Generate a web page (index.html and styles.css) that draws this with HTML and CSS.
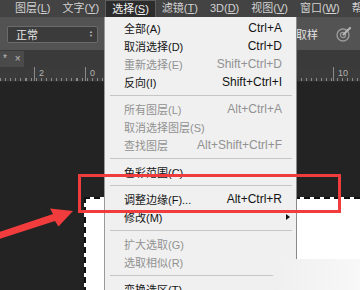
FILE: index.html
```html
<!DOCTYPE html>
<html lang="zh-CN">
<head>
    <meta charset="UTF-8">
    <title>选择菜单</title>
    <link rel="stylesheet" href="styles.css">
</head>
<body>

<div class="app">
    <div class="menubar">
        <span class="top-item">图层(<u>L</u>)</span>
        <span class="top-item">文字(<u>Y</u>)</span>
        <span class="top-item active">选择(<u>S</u>)</span>
        <span class="top-item">滤镜(<u>T</u>)</span>
        <span class="top-item">3D(<u>D</u>)</span>
        <span class="top-item">视图(<u>V</u>)</span>
        <span class="top-item">窗口(<u>W</u>)</span>
        <span class="top-item">帮</span>
    </div>

    <div class="optbar">
        <div class="blend">
            <span>正常</span>
            <span class="spin">&#9650;<br>&#9660;</span>
        </div>
        <span class="opt-label">取样</span>
        <svg class="opt-icon" width="16" height="16" viewBox="0 0 16 16">
            <circle cx="7" cy="9" r="6" fill="none" stroke="#9a9a9a" stroke-width="1.4"/>
            <circle cx="7" cy="9" r="2.6" fill="none" stroke="#9a9a9a" stroke-width="1.2"/>
            <path d="M7.5 8.5 L14 2" stroke="#b5b5b5" stroke-width="2.2" stroke-linecap="round"/>
        </svg>
    </div>

    <div class="tabbar">
        <div class="tab">* <span class="close">×</span></div>
    </div>

    <div class="ruler">
        <div class="ruler-lead"></div>
        <div class="major" style="width:51px">2</div>
        <div class="major" style="width:248px">0</div>
        <div class="major">10</div>
    </div>

    <div class="canvas">
        <div class="doc"></div>
    </div>

    <div class="menu">
        <div class="item"><span>全部(A)</span><span class="key">Ctrl+A</span></div>
        <div class="item"><span>取消选择(D)</span><span class="key">Ctrl+D</span></div>
        <div class="item off"><span>重新选择(E)</span><span class="key">Shift+Ctrl+D</span></div>
        <div class="item"><span>反向(I)</span><span class="key">Shift+Ctrl+I</span></div>
        <div class="sep"></div>
        <div class="item off"><span>所有图层(L)</span><span class="key">Alt+Ctrl+A</span></div>
        <div class="item off"><span>取消选择图层(S)</span></div>
        <div class="item off"><span>查找图层</span><span class="key">Alt+Shift+Ctrl+F</span></div>
        <div class="sep"></div>
        <div class="item"><span>色彩范围(C)</span></div>
        <div class="sep"></div>
        <div class="item"><span>调整边缘(F)...</span><span class="key">Alt+Ctrl+R</span></div>
        <div class="item"><span>修改(M)</span><span class="sub"></span></div>
        <div class="sep"></div>
        <div class="item off"><span>扩大选取(G)</span></div>
        <div class="item off"><span>选取相似(R)</span></div>
        <div class="sep"></div>
        <div class="item"><span>变换选区(T)</span></div>
    </div>

    <div class="mark"></div>

    <svg class="arrow" width="80" height="50" viewBox="0 205 80 50">
        <polygon points="-10,235 53,214 50,208.5 73,211 58.5,226.5 55,221 -10,242" fill="#f03c3c"/>
    </svg>

    <div class="fade"></div>
</div>

</body>
</html>
```

FILE: styles.css
```css
body {
    margin: 0;
    font-family: "Liberation Sans", "Noto Sans CJK SC", sans-serif;
    font-size: 11px;
}
.app {
    position: relative;
    width: 360px;
    height: 290px;
    overflow: hidden;
    background: #232323;
}

/* top menu bar */
.menubar {
    display: flex;
    height: 17px;
    padding-left: 9px;
    background: #434343;
    color: #d2d2d2;
    line-height: 17px;
    white-space: nowrap;
}
.top-item {
    padding: 0 6px;
    box-sizing: border-box;
}
.top-item.active {
    background: #2c2c2c;
    border: 1px solid #5e5e5e;
    border-bottom: none;
    line-height: 16px;
    color: #f2f2f2;
}

/* options bar */
.optbar {
    display: flex;
    align-items: center;
    height: 34px;
    padding: 0 8px 0 7px;
    background: #535353;
    border-bottom: 1px solid #3a3a3a;
    box-sizing: border-box;
}
.blend {
    display: flex;
    align-items: center;
    justify-content: space-between;
    width: 91px;
    height: 17px;
    padding: 0 4px 0 8px;
    margin-top: 1px;
    box-sizing: border-box;
    background: #3b3b3b;
    border: 1px solid #6b6b6b;
    border-radius: 2px;
    color: #e6e6e6;
}
.spin {
    font-size: 4px;
    line-height: 4px;
    color: #bcbcbc;
    text-align: center;
}
.opt-label {
    margin-left: auto;
    color: #e4e4e4;
    font-size: 11px;
}
.opt-icon {
    margin-left: 18px;
}

/* document tab */
.tabbar {
    height: 16px;
    background: #3a3a3a;
}
.tab {
    width: 24px;
    height: 16px;
    padding-left: 3px;
    box-sizing: border-box;
    background: #4a4a4a;
    color: #bdbdbd;
    font-size: 10px;
    line-height: 16px;
}
.close {
    margin-left: 5px;
}

/* ruler */
.ruler {
    display: flex;
    height: 14px;
    background:
        repeating-linear-gradient(to right, #8a8a8a 0 1px, transparent 1px 5.1px) left bottom / 100% 3px no-repeat,
        #3b3b3b;
    border-bottom: 1px solid #2b2b2b;
    color: #b4b4b4;
    font-size: 9px;
    line-height: 13px;
}
.ruler-lead {
    width: 34px;
}
.major {
    padding-left: 4px;
    box-sizing: border-box;
    border-left: 1px solid #8a8a8a;
}

/* canvas with document */
.canvas {
    height: 209px;
    padding: 115px 0 0 84px;
    box-sizing: border-box;
}
.doc {
    height: 100%;
    background: #fff;
    border-top: 2px dashed #111;
    border-left: 2px dashed #111;
}

/* select menu */
.menu {
    position: absolute;
    top: 17px;
    left: 104px;
    width: 193px;
    height: 290px;
    padding-top: 2px;
    box-sizing: border-box;
    background: #f0f0f0;
    border-left: 1px solid #9a9a9a;
    border-right: 1px solid #8a8a8a;
}
.item {
    display: flex;
    justify-content: space-between;
    align-items: center;
    height: 18px;
    padding: 0 14px 0 19px;
    color: #141414;
    white-space: nowrap;
}
.item.off {
    color: #929292;
}
.key {
    font-size: 12px;
}
.sub {
    width: 0;
    height: 0;
    margin-right: -8px;
    border-top: 3px solid transparent;
    border-bottom: 3px solid transparent;
    border-left: 4px solid #111;
}
.sep {
    height: 9px;
    margin: 0 4px 0 5px;
    background: linear-gradient(#c6c6c6, #c6c6c6) center / 100% 1px no-repeat;
}

/* annotation overlays */
.mark {
    position: absolute;
    left: 78px;
    top: 174px;
    width: 263px;
    height: 39px;
    box-sizing: border-box;
    border: 3px solid #f03c3c;
}
.arrow {
    position: absolute;
    left: 0;
    top: 205px;
}
.fade {
    position: absolute;
    left: 273px;
    top: 259px;
    width: 87px;
    height: 31px;
    background: linear-gradient(to right, #efefef, #f8f8f8);
}
```
